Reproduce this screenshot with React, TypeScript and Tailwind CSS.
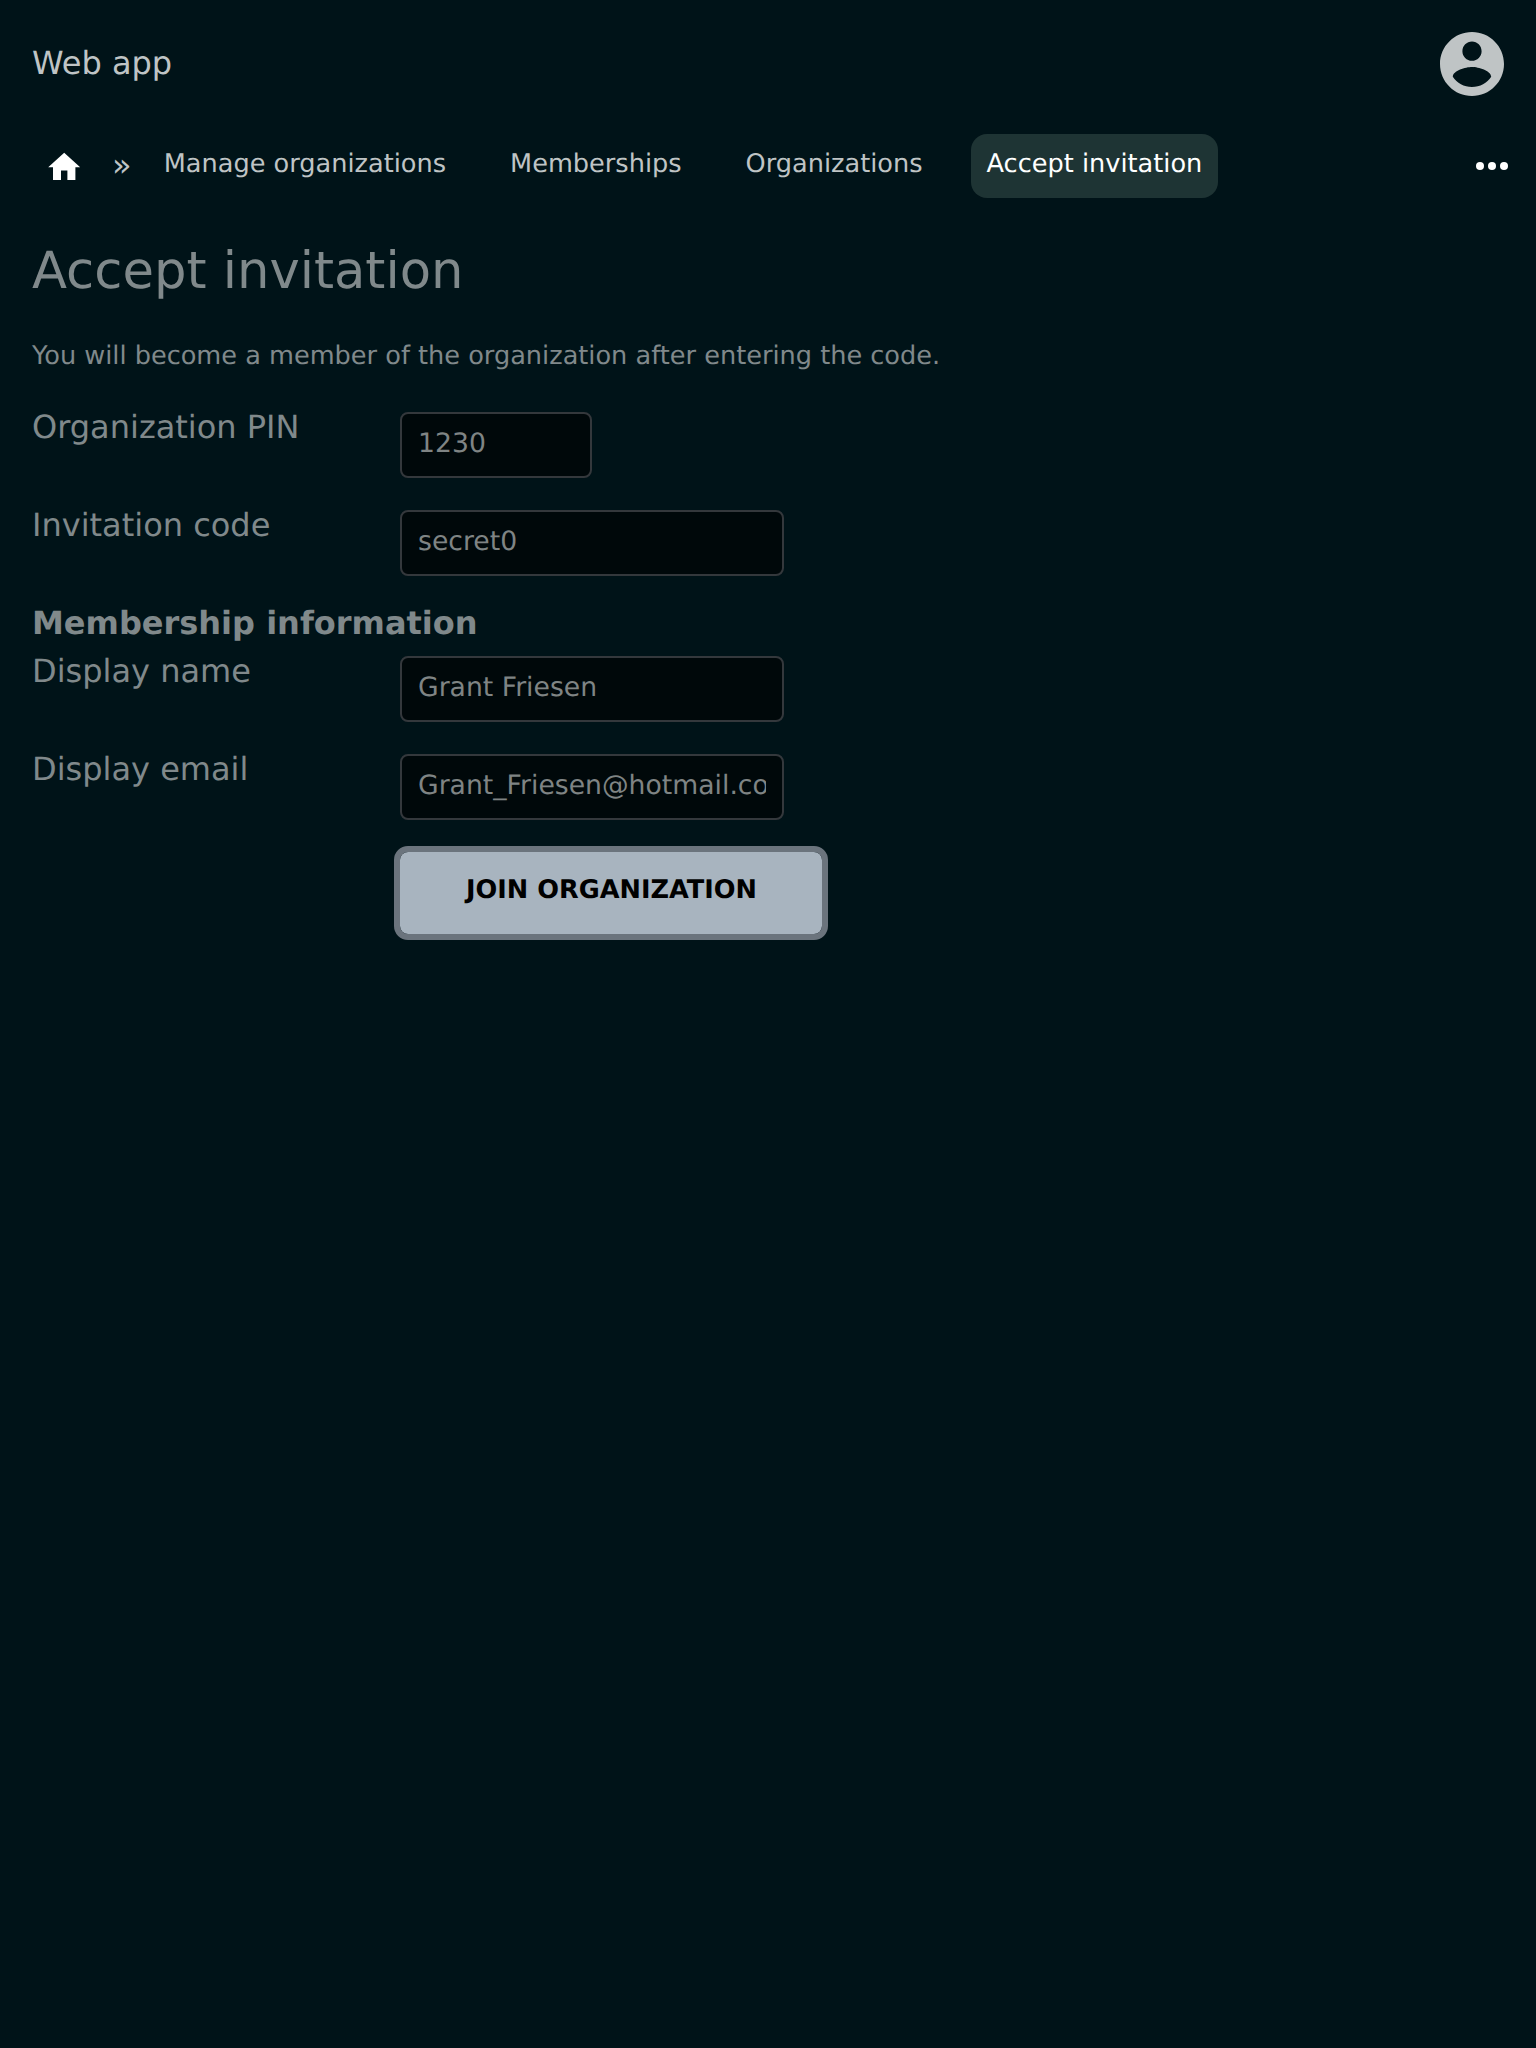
import React from "react";

const links = ["Manage organizations", "Memberships", "Organizations"];

function Field({ label, value, width }: { label: string; value: string; width: string }) {
  return (
    <div className="mb-8 flex h-[66px] items-start">
      <label className="w-[368px] text-[32px] leading-[30px]">{label}</label>
      <input
        readOnly
        value={value}
        className={`h-[66px] rounded-lg border-2 border-[#34383c] bg-[#00080a] px-4 pb-1 text-[26.667px] text-[#7f8484] outline-none [text-rendering:geometricPrecision] ${width}`}
      />
    </div>
  );
}

export default function App() {
  return (
    <div className="min-h-[2048px] w-full bg-[#001318] font-['DejaVu_Sans',sans-serif] text-[#80898b] [text-rendering:geometricPrecision]">
      <header className="flex h-32 items-center justify-between px-8 text-[#bfc4c5]">
        <div className="pb-0.5 text-[32px] leading-[48px]">Web app</div>
        <svg className="size-16" viewBox="2 2 20 20" fill="currentColor">
          <path d="M12 2C6.48 2 2 6.48 2 12s4.48 10 10 10 10-4.48 10-10S17.52 2 12 2zm0 3c1.66 0 3 1.34 3 3s-1.34 3-3 3-3-1.34-3-3 1.34-3 3-3zm0 14.2c-2.5 0-4.71-1.28-6-3.22.03-1.99 4-3.08 6-3.08 1.99 0 5.97 1.09 6 3.08-1.29 1.94-3.5 3.22-6 3.22z" />
        </svg>
      </header>
      <nav className="mt-1.5 flex h-16 items-center pr-7 pl-8 text-[25.6px] leading-[38.4px] text-[#bfc4c5]">
        <svg className="mx-[12.8px] mt-[2px] size-[38.4px] text-white" viewBox="0 0 24 24" fill="currentColor">
          <path d="M10 20v-6h4v6h5v-8h3L12 3 2 12h3v8z" />
        </svg>
        <span className="ml-4 w-[35.8px] pb-0.5 text-[32px]">»</span>
        <div className="flex gap-8">
          {links.map((l) => (
            <a key={l} className="h-16 px-4 pt-[11px] whitespace-nowrap">{l}</a>
          ))}
          <a className="h-16 rounded-2xl bg-[#1e3434] px-4 pt-[11px] whitespace-nowrap text-white">Accept invitation</a>
        </div>
        <svg className="ml-auto h-2 w-8 text-white" viewBox="0 0 32 8" fill="currentColor">
          <circle cx="4" cy="4" r="4" />
          <circle cx="16" cy="4" r="4" />
          <circle cx="28" cy="4" r="4" />
        </svg>
      </nav>
      <main className="px-8 pt-[42px]">
        <h1 className="text-[51.2px] leading-[62px]">Accept invitation</h1>
        <p className="mt-[35px] mb-[37px] text-[25.6px] leading-[38px]">
          You will become a member of the organization after entering the code.
        </p>
        <Field label="Organization PIN" value="1230" width="w-48" />
        <Field label="Invitation code" value="secret0" width="w-96" />
        <h2 className="h-12 text-[32px] leading-[30px] font-bold">Membership information</h2>
        <Field label="Display name" value="Grant Friesen" width="w-96" />
        <Field label="Display email" value="Grant_Friesen@hotmail.com" width="w-96" />
        <button className="ml-[368px] h-[82px] w-[422px] rounded-lg bg-[#a8b4bf] pb-1.5 pl-px text-[25.6px] font-bold text-black outline-[6.4px] outline-[#6b747d] [text-rendering:geometricPrecision]">
          JOIN ORGANIZATION
        </button>
      </main>
    </div>
  );
}
